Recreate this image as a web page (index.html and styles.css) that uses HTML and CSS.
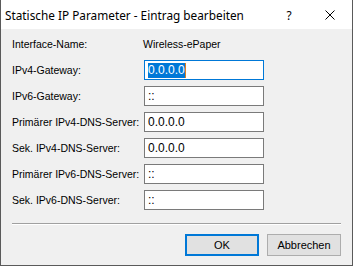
FILE: index.html
```html
<!DOCTYPE html>
<html lang="de">
<head>
    <meta charset="UTF-8">
    <title>Statische IP Parameter - Eintrag bearbeiten</title>
    <link rel="stylesheet" href="styles.css">
</head>
<body>

    <div class="dialog">
        <div class="titlebar">
            <span class="title">Statische IP Parameter - Eintrag bearbeiten</span>
            <span class="help">?</span>
            <span class="close">
                <svg width="10" height="10" viewBox="0 0 10 10">
                    <path d="M0.5 0.5 L9.5 9.5 M9.5 0.5 L0.5 9.5" stroke="#000" stroke-width="1" fill="none"/>
                </svg>
            </span>
        </div>

        <div class="content">
            <div class="form">
                <label>Interface-Name:</label>
                <span class="value">Wireless-ePaper</span>

                <label>IPv4-Gateway:</label>
                <div class="field focused"><span class="selected">0.0.0.0</span><span class="caret"></span></div>

                <label>IPv6-Gateway:</label>
                <div class="field">::</div>

                <label>Primärer IPv4-DNS-Server:</label>
                <div class="field">0.0.0.0</div>

                <label>Sek. IPv4-DNS-Server:</label>
                <div class="field">0.0.0.0</div>

                <label>Primärer IPv6-DNS-Server:</label>
                <div class="field">::</div>

                <label>Sek. IPv6-DNS-Server:</label>
                <div class="field">::</div>
            </div>

            <div class="separator"></div>

            <div class="buttons">
                <button class="default">OK</button>
                <button>Abbrechen</button>
            </div>
        </div>
    </div>

</body>
</html>
```

FILE: styles.css
```css
body {
    margin: 0;
    background: #f0f0f0;
    font-family: "Liberation Sans", Arial, sans-serif;
    font-size: 10.5px;
    color: #000;
}
.dialog {
    width: 353px;
    height: 266px;
    box-sizing: border-box;
    border: 1px solid #5a5a5a;
    border-top: none;
    background: #f0f0f0;
}
.titlebar {
    height: 29px;
    background: #fff;
    display: flex;
    align-items: center;
    font-family: "Noto Sans", sans-serif;
    font-size: 11.8px;
}
.title {
    padding-left: 4px;
    flex: 1;
}
.help {
    width: 20px;
    margin-right: 26px;
    text-align: center;
}
.close {
    display: flex;
    width: 10px;
    margin-right: 17px;
}
.content {
    padding: 5px 11px 0 11px;
}
.form {
    display: grid;
    grid-template-columns: 132px 120px;
    grid-auto-rows: 20px;
    row-gap: 6px;
    align-items: center;
}
label {
    white-space: nowrap;
}
.value {
    margin-left: -1px;
}
.field {
    height: 20px;
    box-sizing: border-box;
    border: 1px solid #7a7a7a;
    background: #fff;
    padding: 0 3px;
    font-size: 12px;
    display: flex;
    align-items: center;
}
.focused {
    border-color: #0078d7;
}
.selected {
    background: #0078d7;
    color: #fff;
    line-height: 15px;
}
.caret {
    width: 1px;
    height: 15px;
    background: #e08020;
}
.separator {
    margin-top: 13px;
    height: 1px;
    background: #a0a0a0;
    border-bottom: 1px solid #fff;
}
.buttons {
    display: flex;
    justify-content: flex-end;
    gap: 8px;
    margin-top: 9px;
}
button {
    width: 74px;
    height: 22px;
    box-sizing: border-box;
    border: 1px solid #adadad;
    background: #e1e1e1;
    font-family: "Liberation Sans", Arial, sans-serif;
    font-size: 11px;
    color: #000;
    padding: 0;
}
button.default {
    border: 2px solid #0078d7;
}
```
